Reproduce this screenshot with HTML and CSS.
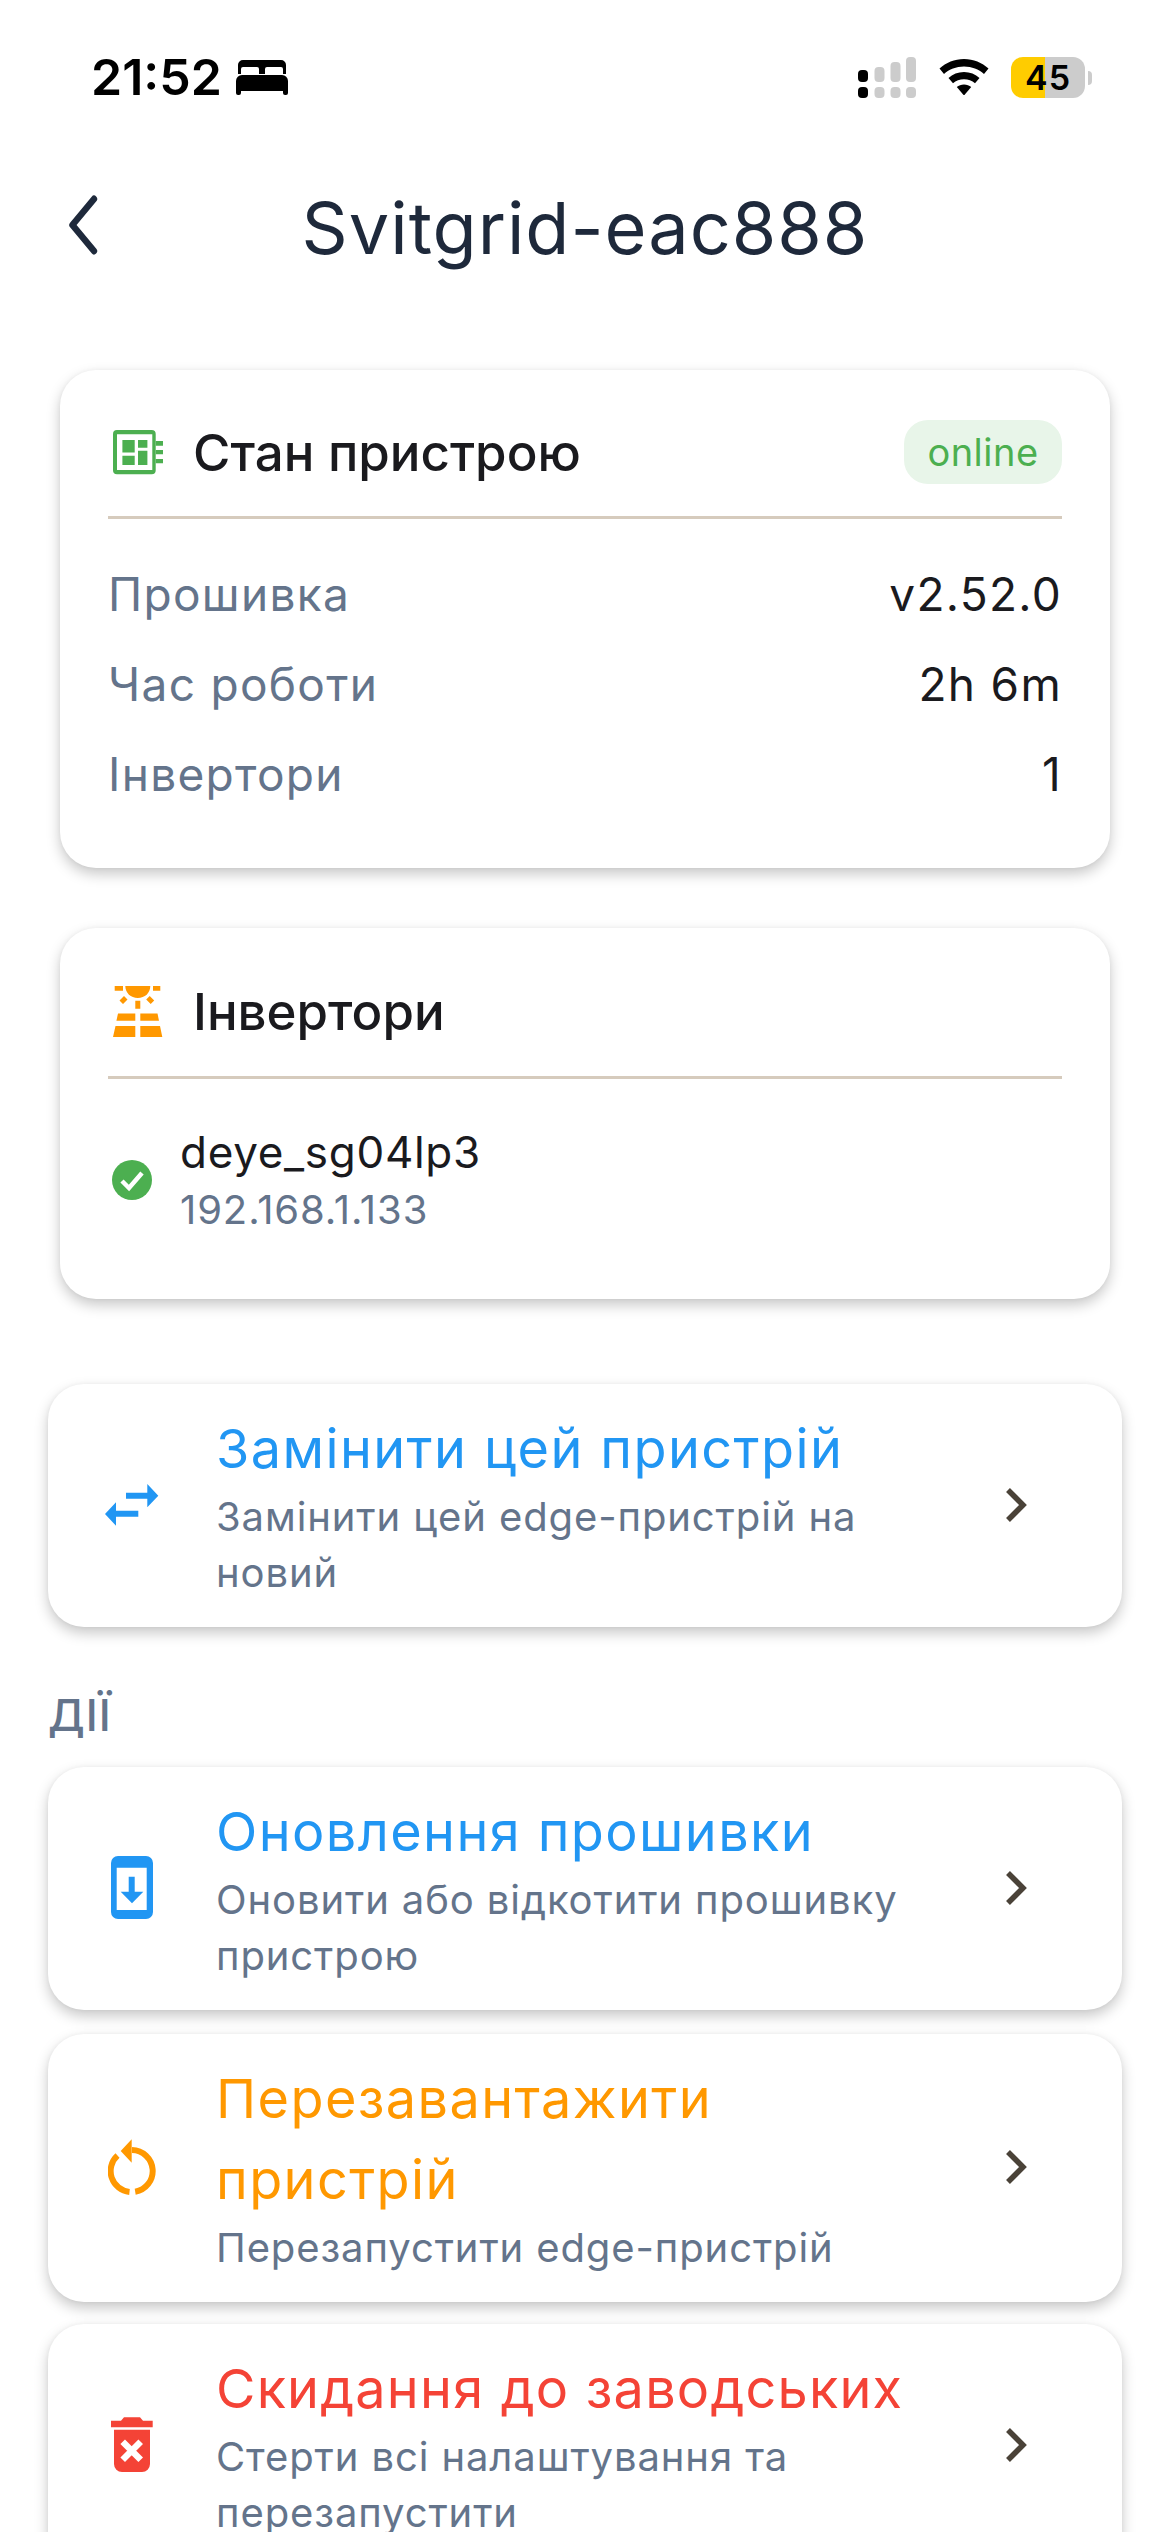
FILE: index.html
```html
<!DOCTYPE html>
<html lang="uk">
<head>
<meta charset="utf-8">
<title>Svitgrid-eac888</title>
<link rel="stylesheet" href="styles.css">
</head>
<body>
<div class="page">
  <div class="status">
    <div class="status-left">
      <span class="time">21:52</span>
      <svg class="bed" viewBox="0 0 52 36"><path d="M7 0h38a5 5 0 0 1 5 5v9h-3V9a2 2 0 0 0-2-2H31a2 2 0 0 0-2 2v5h-6V9a2 2 0 0 0-2-2H7a2 2 0 0 0-2 2v5H2V5a5 5 0 0 1 5-5zM6 15h40a6 6 0 0 1 6 6v12a2 2 0 0 1-2 2h-1a2 2 0 0 1-2-2v-2H5v2a2 2 0 0 1-2 2H2a2 2 0 0 1-2-2V21a6 6 0 0 1 6-6z"/></svg>
    </div>
    <div class="status-right">
      <svg class="signal" viewBox="0 0 58 41"><g fill="#ccc"><rect x="16.500" y="10" width="10" height="15" rx="4"/><rect x="32.500" y="5" width="10" height="20" rx="4"/><rect x="48" y="0" width="10" height="25" rx="4"/><rect x="16.500" y="30" width="10" height="11" rx="4"/><rect x="32.500" y="30" width="10" height="11" rx="4"/><rect x="48" y="30" width="10" height="11" rx="4"/></g><rect x="0" y="13" width="10" height="12" rx="4"/><rect x="0" y="30" width="10" height="11" rx="4"/></svg>
      <svg class="wifi" viewBox="0 0 50 36"><path d="M25 0c9.500 0 18 3.600 24.500 9.500l-4.500 5.500C39.800 10.300 32.800 7.500 25 7.500S10.200 10.300 5 15L.5 9.500C7 3.600 15.500 0 25 0z"/><path d="M25 13c6 0 11.400 2.200 15.500 5.900l-4.500 5.400c-2.900-2.500-6.800-4-11-4s-8.100 1.500-11 4l-4.500-5.400C13.600 15.200 19 13 25 13z"/><path d="M25 25.500c2.800 0 5.300 1 7.200 2.600L25 36.500l-7.200-8.400c1.900-1.600 4.400-2.600 7.200-2.600z"/></svg>
      <div class="battery"><div class="batt-body"><span class="batt-num">45</span></div><span class="batt-cap"></span></div>
    </div>
  </div>

  <header class="nav">
    <svg class="back" viewBox="0 0 36 60"><path d="M30 4 6 30l24 26" transform="matrix(.9 0 0 1 3 0)"/></svg>
    <h1 class="nav-title">Svitgrid-eac888</h1>
  </header>

  <section class="card card-state">
    <div class="card-head">
      <svg class="icon-chip" viewBox="0 0 50 45"><path fill="#4caf50" fill-rule="evenodd" d="M4 0h34.700a4 4 0 0 1 4 4v36.300a4 4 0 0 1-4 4H4a4 4 0 0 1-4-4V4a4 4 0 0 1 4-4zM4 4.300V40h35.300V4.300z"/><path fill="#4caf50" d="M9.400 10h12.300v12.500H9.400zM25 10h9.400v7.700H25zM9.400 25.700h12.300V35H9.400zM25 20.700h9.400V35H25zM42.700 11H50v4.700h-7.300zM42.700 20H50v4.300h-7.300zM42.700 29H50v4.300h-7.300z"/></svg>
      <h2 class="card-title">Стан пристрою</h2>
      <span class="pill">online</span>
    </div>
    <div class="rows">
      <div class="row"><span class="row-label">Прошивка</span><span class="row-value">v2.52.0</span></div>
      <div class="row"><span class="row-label">Час роботи</span><span class="row-value">2h 6m</span></div>
      <div class="row"><span class="row-label">Інвертори</span><span class="row-value">1</span></div>
    </div>
  </section>

  <section class="card card-inv">
    <div class="card-head">
      <svg class="icon-solar" viewBox="0 0 50 51"><path fill="#ff9800" d="M1.700 0H10v4.700H1.700zM40 0h7.300v4.700H40zM12.300 0h25c0 7-5.500 12-12.500 12S12.300 7 12.300 0zM22.300 14.700h5v8h-5zM6.500 14.500l4.500-4.500 3.500 3.500L10 18zM41.200 14.500 36.700 10l-3.500 3.500 4.500 4.500zM5 27.600h17.300v7.100H3.400zM27.300 27.600h17.200l1.500 7.100H27.300zM2.500 40h19.800v11H0zM27.300 40H47l2.300 11h-22z"/></svg>
      <h2 class="card-title">Інвертори</h2>
    </div>
    <div class="inv-row">
      <svg class="check" viewBox="0 0 40 40"><circle cx="20" cy="20" r="20" fill="#4caf50"/><path d="m10 21 7 7 13-15" fill="none" stroke="#fff" stroke-width="4.500"/></svg>
      <div class="inv-text">
        <div class="inv-name">deye_sg04lp3</div>
        <div class="inv-ip">192.168.1.133</div>
      </div>
    </div>
  </section>

  <a class="action action-first">
    <svg class="icon-swap" viewBox="0 0 54 42"><path fill="#2196f3" d="M21 8.700h21.300V0l11 11.700-11 11.600v-8.600H21zM33.300 26.700v6H11v9L0 30l11-11.700v8.400z"/></svg>
    <div class="action-text">
      <div class="action-title blue">Замінити цей пристрій</div>
      <div class="action-sub">Замінити цей edge-пристрій на новий</div>
    </div>
    <svg class="chev" viewBox="0 0 24 36"><path d="M4 3l15 15L4 33"/></svg>
  </a>

  <div class="section-label">ДІЇ</div>

  <a class="action">
    <svg class="icon-update" viewBox="0 0 42 63"><path fill="#2196f3" fill-rule="evenodd" d="M7 0h28a7 7 0 0 1 7 7v49a7 7 0 0 1-7 7H7a7 7 0 0 1-7-7V7a7 7 0 0 1 7-7zM5.700 11.700V54h30V11.700z"/><path fill="#2196f3" d="M17.700 20.700h6v15h8.600L21 47.300 9.700 35.700h8z"/></svg>
    <div class="action-text">
      <div class="action-title blue">Оновлення прошивки</div>
      <div class="action-sub">Оновити або відкотити прошивку пристрою</div>
    </div>
    <svg class="chev" viewBox="0 0 24 36"><path d="M4 3l15 15L4 33"/></svg>
  </a>

  <a class="action">
    <svg class="icon-restart" viewBox="0 0 48 56"><path fill="none" stroke="#ff9800" stroke-width="6" d="M24 11A21 21 0 0 1 27.200 52.700M21.500 52.900A21 21 0 0 1 9.500 16.500"/><path fill="#ff9800" d="M23.700.3v23.400L12.700 12z"/></svg>
    <div class="action-text">
      <div class="action-title orange">Перезавантажити пристрій</div>
      <div class="action-sub">Перезапустити edge-пристрій</div>
    </div>
    <svg class="chev" viewBox="0 0 24 36"><path d="M4 3l15 15L4 33"/></svg>
  </a>

  <a class="action action-last">
    <svg class="icon-reset" viewBox="0 0 42 55"><path fill="#f44336" d="M13 .3h16l3 3.400h9.700v6.600H0V3.700h10zM3 12.700h36V47a8 8 0 0 1-8 8H11a8 8 0 0 1-8-8z"/><path stroke="#fff" stroke-width="6.500" d="m11.700 24.700 18 18M29.700 24.700l-18 18"/></svg>
    <div class="action-text">
      <div class="action-title red">Скидання до заводських</div>
      <div class="action-sub">Стерти всі налаштування та перезапустити</div>
    </div>
    <svg class="chev" viewBox="0 0 24 36"><path d="M4 3l15 15L4 33"/></svg>
  </a>
</div>
</body>
</html>
```
FILE: styles.css
```css
* { box-sizing: border-box; }
html, body { margin: 0; height: 100%; overflow: hidden; background: #fff; }
body { font-family: Inter, "Liberation Sans", sans-serif; }
.page { width: 1170px; height: 2532px; overflow: hidden; padding: 0 48px; }

.status { height: 150px; margin: 0 -48px; padding: 57px 78px 0 91px; display: flex; justify-content: space-between; align-items: flex-start; }
.status-left { display: flex; align-items: center; gap: 14px; height: 41px; }
.time { font-size: 50px; font-weight: 600; color: #000; line-height: 41px; letter-spacing: 0; }
.bed { width: 52px; height: 36px; fill: #000; }
.status-right { display: flex; align-items: flex-start; height: 41px; }
.signal { width: 58px; height: 41px; }
.wifi { width: 50px; height: 36px; margin: 2px 0 0 23px; }
.battery { margin-left: 22px; display: flex; align-items: center; height: 41px; }
.batt-body { width: 74px; height: 41px; border-radius: 12px; background: linear-gradient(90deg, #ffcc00 0 46%, #ccc 46% 100%); display: flex; align-items: center; justify-content: center; }
.batt-num { font-size: 34px; font-weight: 600; color: #000; line-height: 41px; letter-spacing: 1px; }
.batt-cap { width: 4px; height: 14px; margin-left: 3px; background: #ccc; border-radius: 0 4px 4px 0; }

.nav { position: relative; height: 70px; margin-top: 43px; display: flex; justify-content: center; align-items: center; }
.back { position: absolute; left: 16px; top: 2px; width: 36px; height: 60px; fill: none; stroke: #1e293b; stroke-width: 7; stroke-linecap: round; stroke-linejoin: round; }
.nav-title { margin: 0; font-size: 72px; font-weight: 400; color: #1e293b; line-height: 70px; letter-spacing: 1px; }

.card { background: #fff; margin: 0 12px; border-radius: 36px; padding: 0 48px; box-shadow: 0 6px 14px rgba(0,0,0,.22), 0 0 4px rgba(0,0,0,.04); }
.card-state { margin-top: 107px; height: 498px; }
.card-inv { margin-top: 60px; height: 371px; }
.card-head { display: flex; align-items: center; height: 149px; border-bottom: 3px solid #d6cbbd; padding: 18px 0 0 5px; }
.card-inv .card-head { height: 151px; }
.icon-chip { width: 50px; height: 45px; flex: none; }
.icon-solar { width: 50px; height: 51px; flex: none; }
.card-title { margin: 0 0 0 30px; font-size: 51px; font-weight: 500; color: #1a1a1e; flex: 1; letter-spacing: 0; }
.pill { height: 64px; width: 158px; border-radius: 24px; background: #e8f5e9; color: #4caf50; font-size: 38px; font-weight: 400; display: flex; align-items: center; justify-content: center; letter-spacing: .5px; }
.rows { padding-top: 30px; display: flex; flex-direction: column; }
.row { height: 90px; display: flex; justify-content: space-between; align-items: center; font-size: 46px; letter-spacing: 1.3px; }
.row-label { color: #64748b; }
.row-value { color: #1a1a1e; }

.inv-row { display: flex; align-items: center; margin-top: 43px; }
.check { width: 40px; height: 40px; flex: none; margin-left: 4px; }
.inv-text { margin-left: 28px; }
.inv-name { font-size: 44px; line-height: 60px; color: #1a1a1e; letter-spacing: .7px; }
.inv-ip { font-size: 40px; line-height: 56px; color: #64748b; letter-spacing: .9px; }

.action { display: flex; align-items: center; background: #fff; border-radius: 36px; padding: 24px 94px 26px 57px; box-shadow: 0 6px 14px rgba(0,0,0,.22), 0 0 4px rgba(0,0,0,.04); margin-top: 24px; }
.action-first { margin-top: 85px; }
.action-last { margin-top: 22px; }
.action svg:first-child { flex: none; }
.icon-swap { width: 54px; height: 42px; margin-right: 57px; }
.icon-update { width: 42px; height: 63px; margin: 0 63px 0 6px; }
.icon-restart { width: 48px; height: 56px; margin: 0 60px 0 3px; }
.icon-reset { width: 42px; height: 55px; margin: 0 63px 0 6px; }
.action-text { flex: 1; }
.action-title { font-size: 54px; line-height: 81px; letter-spacing: 1.4px; }
.action-sub { font-size: 40px; line-height: 56px; color: #64748b; letter-spacing: .9px; }
.blue { color: #2196f3; }
.orange { color: #ff9800; }
.action-title.red { color: #f44336; letter-spacing: 1.2px; }
.chev { width: 24px; height: 36px; flex: none; fill: none; stroke: #4a4238; stroke-width: 5.500; margin-left: 44px; }
.section-label { font-size: 44px; font-weight: 500; color: #64748b; line-height: 56px; margin-top: 60px; margin-bottom: 24px; letter-spacing: 1px; }
.section-label + .action { margin-top: 0; }
```
